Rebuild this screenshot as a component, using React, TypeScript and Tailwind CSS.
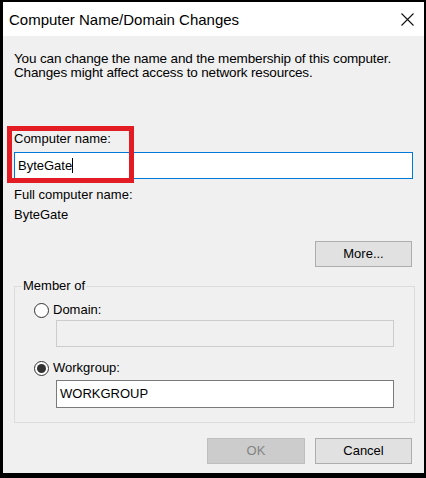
import React from "react";

const font = { fontFamily: '"Liberation Sans", Arial, sans-serif' };

function Radio({ checked, label }: { checked?: boolean; label: string }) {
  return (
    <div className="flex items-center h-[16px] ml-[19px]">
      <span className="w-[15px] h-[15px] rounded-full border border-[#333] bg-white flex items-center justify-center">
        {checked && <span className="w-[9px] h-[9px] rounded-full bg-[#333]" />}
      </span>
      <span className="ml-[4px] text-[13px] leading-[16px] text-black">{label}</span>
    </div>
  );
}

export default function App() {
  return (
    <div
      className="w-[426px] h-[478px] bg-black pl-[3px] pt-[2px] pr-[2px] pb-[5px] overflow-hidden"
      style={font}
    >
      <div className="relative w-full h-full bg-[#f0f0f0] flex flex-col overflow-hidden">
        {/* Title bar */}
        <div className="h-[34px] bg-white flex items-center justify-between pl-[6px] pr-[10px] shrink-0">
          <span className="text-[15px] text-black leading-[16px] mt-[2px]">
            Computer Name/Domain Changes
          </span>
          <svg width="13" height="13" viewBox="0 0 13 13" className="mt-[1px]">
            <path d="M0.5 0.5 L12.5 12.5 M12.5 0.5 L0.5 12.5" stroke="#111" strokeWidth="1.1" />
          </svg>
        </div>

        {/* Body */}
        <div className="flex flex-col pl-[11px] pr-[11px] text-black">
          <p className="mt-[16px] text-[13.5px] leading-[14px] whitespace-nowrap tracking-[-0.15px]">
            You can change the name and the membership of this computer.
            <br />
            Changes might affect access to network resources.
          </p>

          <div className="mt-[51px] text-[13px] leading-[16px]">Computer name:</div>
          <div className="mt-[5px] w-[399px] h-[27px] border border-[#0078d7] bg-white flex items-center pl-[3px]">
            <span className="text-[13px] leading-[16px]">ByteGate</span>
            <span className="w-[1px] h-[15px] bg-black" />
          </div>

          <div className="mt-[8px] text-[13px] leading-[16px]">Full computer name:</div>
          <div className="mt-[4px] text-[13px] leading-[16px]">ByteGate</div>

          <button className="mt-[18px] self-end mr-[1px] w-[97px] h-[26px] bg-[#e1e1e1] border border-[#adadad] text-[13px] text-black">
            More...
          </button>

          {/* Group box */}
          <div className="relative mt-[19px] w-[401px] h-[137px] border border-[#dcdcdc] flex flex-col pt-[15px]">
            <span className="absolute left-[7px] top-[-9px] px-[1px] bg-[#f0f0f0] text-[13px] leading-[16px]">
              Member of
            </span>
            <Radio label="Domain:" />
            <div className="mt-[2px] ml-[41px] w-[338px] h-[27px] border border-[#cccccc] bg-[#f0f0f0]" />
            <div className="mt-[13px]">
              <Radio checked label="Workgroup:" />
            </div>
            <div className="mt-[4px] ml-[41px] w-[338px] h-[28px] border border-[#7a7a7a] bg-white flex items-center pl-[3px]">
              <span className="text-[13px] leading-[16px]">WORKGROUP</span>
            </div>
          </div>

          <div className="mt-[15px] flex justify-end gap-[10px] mr-[1px]">
            <button className="w-[98px] h-[26px] bg-[#cccccc] border border-[#bfbfbf] text-[13px] text-[#838383]">
              OK
            </button>
            <button className="w-[97px] h-[26px] bg-[#e1e1e1] border border-[#adadad] text-[13px] text-black">
              Cancel
            </button>
          </div>
        </div>

        {/* Red annotation box */}
        <div className="absolute left-[4px] top-[124px] w-[127px] h-[57px] border-[5px] border-[#e31b23]" />
      </div>
    </div>
  );
}
